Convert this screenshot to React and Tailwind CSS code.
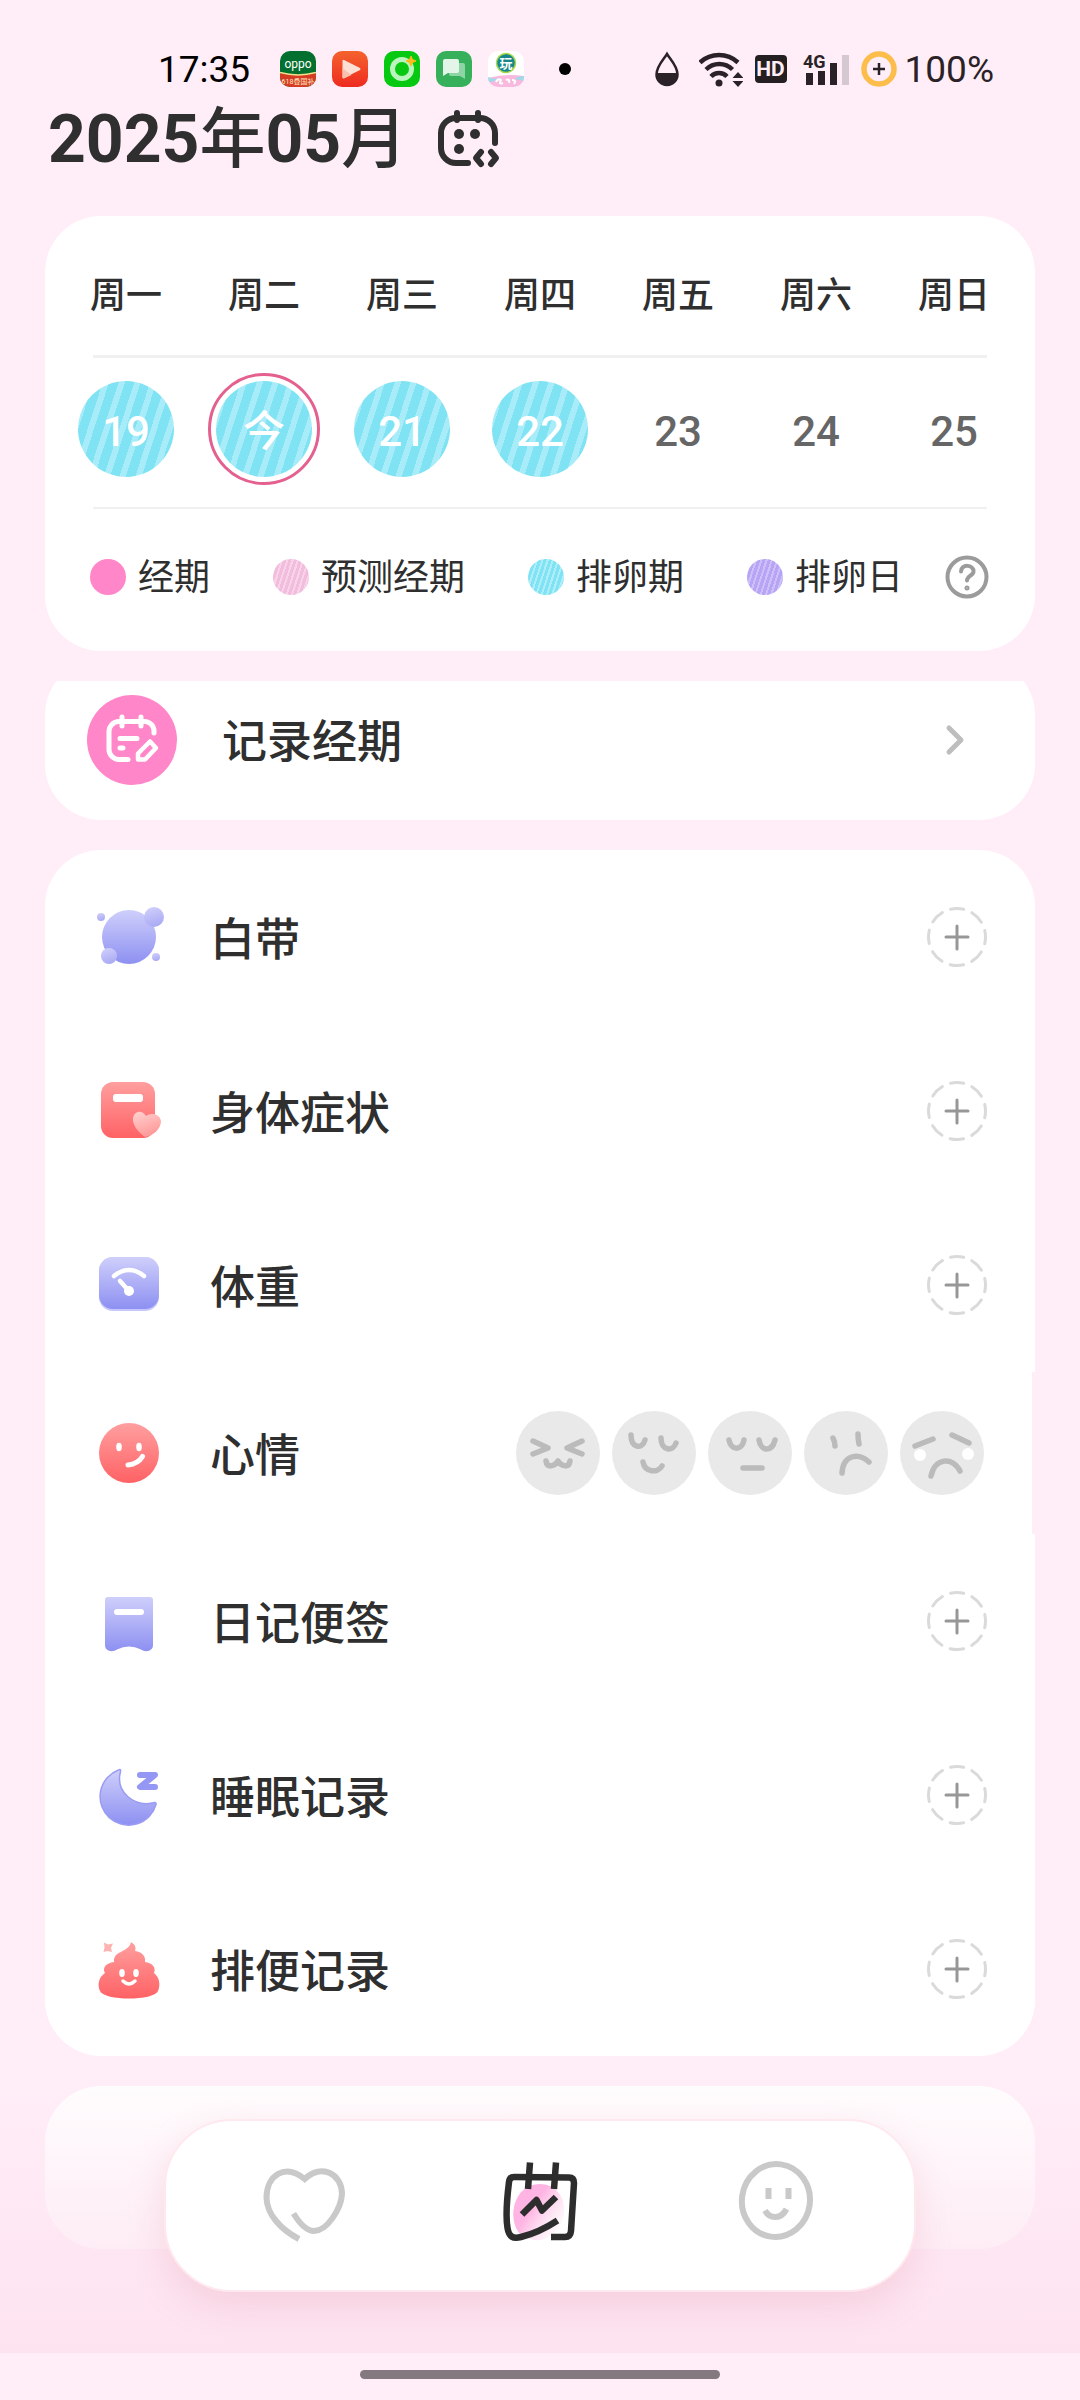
import { ChevronRight } from "lucide-react";

const weekdays = ["周一", "周二", "周三", "周四", "周五", "周六", "周日"];

const days = [
  { label: "19", fertile: true },
  { label: "今", fertile: true, today: true },
  { label: "21", fertile: true },
  { label: "22", fertile: true },
  { label: "23" },
  { label: "24" },
  { label: "25" },
];

const legend = [
  { label: "经期", dot: "bg-[#ff86c8]" },
  { label: "预测经期", dot: "bg-[repeating-linear-gradient(108deg,#f2bcdd_0_3px,#f8d3ea_3px_5px)]" },
  { label: "排卵期", dot: "bg-[repeating-linear-gradient(108deg,#7fe3f3_0_3px,#aeeefa_3px_5px)]" },
  { label: "排卵日", dot: "bg-[repeating-linear-gradient(108deg,#b7a4f5_0_3px,#cdc0fa_3px_5px)]" },
];

const records = [
  { name: "白带", icon: DischargeIcon },
  { name: "身体症状", icon: SymptomIcon },
  { name: "体重", icon: WeightIcon },
  { name: "心情", icon: MoodIcon, moods: true },
  { name: "日记便签", icon: DiaryIcon },
  { name: "睡眠记录", icon: SleepIcon },
  { name: "排便记录", icon: PoopIcon },
];

const faces = [
  { name: "开心", d: "M17 30l15 7-15 6M66 30l-15 7 15 6M30 50c1 7 8 6 12 0c4 6 11 7 12 0" },
  { name: "愉快", d: "M19 24c0 13 11 15 14 5M49 27c0 13 12 14 15 5M31 51c2 11 15 11 19 4" },
  { name: "平静", d: "M21 29c2 11 13 11 15 0M51 29c2 12 13 12 16 0M35 57h19" },
  { name: "低落", d: "M29 27q2 4 2 8M54 23q0 5 1 10M38 62c1-18 16-21 27-11" },
  { name: "难过", d: "M15 35l18-7M52 24l17 8M31 65c4-18 21-20 29-5", tears: true },
];

function Gradients() {
  return (
    <svg className="absolute size-0" aria-hidden="true">
      <defs>
        <linearGradient id="violet" x1="0" y1="0" x2="0" y2="1">
          <stop offset="0" stopColor="#cfcffb" />
          <stop offset="1" stopColor="#8d90f1" />
        </linearGradient>
        <linearGradient id="lilac" x1="0" y1="0" x2="0.3" y2="1">
          <stop offset="0" stopColor="#d3d1fb" />
          <stop offset="1" stopColor="#abacf5" />
        </linearGradient>
        <linearGradient id="coral" x1="0" y1="0" x2="0" y2="1">
          <stop offset="0" stopColor="#ff9f9f" />
          <stop offset="1" stopColor="#ff6265" />
        </linearGradient>
        <linearGradient id="blush" x1="0" y1="0" x2="0.4" y2="1">
          <stop offset="0" stopColor="#ffd3d1" />
          <stop offset="1" stopColor="#ff9a9a" />
        </linearGradient>
        <linearGradient id="petal" x1="0.1" y1="0.2" x2="0.9" y2="0.8">
          <stop offset="0.35" stopColor="#ffb4e3" />
          <stop offset="1" stopColor="#ffe9f4" stopOpacity="0.3" />
        </linearGradient>
        <linearGradient id="play" x1="0" y1="0" x2="0" y2="1">
          <stop offset="0" stopColor="#f4632d" />
          <stop offset="1" stopColor="#ee2a20" />
        </linearGradient>
      </defs>
    </svg>
  );
}

function DischargeIcon() {
  return (
    <svg viewBox="0 0 72 72" className="size-[72px]">
      <circle cx="36" cy="36" r="27" fill="url(#violet)" />
      <circle cx="61" cy="16" r="10" fill="url(#lilac)" />
      <circle cx="16" cy="55" r="8" fill="url(#lilac)" />
      <circle cx="8" cy="16" r="4" fill="url(#lilac)" />
      <circle cx="63" cy="56" r="4" fill="url(#lilac)" />
    </svg>
  );
}

function SymptomIcon() {
  return (
    <svg viewBox="0 0 72 72" className="size-[72px]">
      <rect x="8" y="7" width="54" height="56" rx="12" fill="url(#coral)" />
      <rect x="20" y="19" width="30" height="8" rx="3" fill="#fff" />
      <path d="M52 62C46 58 39 50 40 43C41 36 49 34 53 41C58 37 67 39 68 46C68 54 60 61 52 62Z" fill="url(#blush)" />
    </svg>
  );
}

function WeightIcon() {
  return (
    <svg viewBox="0 0 72 72" className="size-[72px]">
      <rect x="6" y="8" width="60" height="54" rx="14" fill="#c6c7fb" />
      <rect x="6" y="8" width="60" height="52" rx="14" fill="url(#violet)" />
      <path d="M21 27q15-12 30 0" fill="none" stroke="#fff" strokeWidth="4.5" strokeLinecap="round" />
      <path d="M27 32l9 10" stroke="#fff" strokeWidth="4.5" strokeLinecap="round" />
      <circle cx="36" cy="42" r="5" fill="#fff" />
    </svg>
  );
}

function MoodIcon() {
  return (
    <svg viewBox="0 0 72 72" className="size-[72px]">
      <circle cx="36" cy="36" r="30" fill="url(#coral)" />
      <ellipse cx="26" cy="30" rx="2.8" ry="4.2" fill="#fff" />
      <ellipse cx="46" cy="30" rx="2.8" ry="4.2" fill="#fff" />
      <path d="M35 48q10-1 14.500-8.500" fill="none" stroke="#fff" strokeWidth="5" strokeLinecap="round" />
    </svg>
  );
}

function DiaryIcon() {
  return (
    <svg viewBox="0 0 72 72" className="size-[72px]">
      <path d="M15 12h42a3 3 0 0 1 3 3v45c0 6-7 8-12 4.500q-12-6-24 0C19 68 12 66 12 60V15a3 3 0 0 1 3-3Z" fill="url(#violet)" />
      <rect x="21" y="24" width="30" height="6" rx="3" fill="#fff" />
    </svg>
  );
}

function SleepIcon() {
  return (
    <svg viewBox="0 0 72 72" className="size-[72px]">
      <path
        d="M25.500 11A28.500 28.500 0 1 0 63 45.500C63.500 43.500 62 43 60 43.800C42 48 22 34 27.500 12.500C28 10.500 27 10 25.500 11Z"
        fill="url(#violet)"
        stroke="#9a9cf3"
        strokeWidth="1.5"
      />
      <path d="M47 16h15L47 28h15" fill="none" stroke="#9597f5" strokeWidth="6" strokeLinecap="round" strokeLinejoin="round" />
    </svg>
  );
}

function PoopIcon() {
  return (
    <svg viewBox="0 0 72 72" className="size-[72px]">
      <path
        d="M38 9C43 12 43 15 42 18C49 19 53 23 52 29C60 30 63 35 61 40C66 44 68 51 65 58C61 68 11 68 7 58C4 51 6 44 12 40C9 35 13 30 21 29C20 17 36 20 38 9Z"
        fill="url(#coral)"
      />
      <path d="M11 9.500l4 2 5-1-2 4.500 1 4-4.500-1-4 1 1-4.500Z" fill="#ffb3b1" />
      <ellipse cx="29" cy="40" rx="2.8" ry="4" fill="#fff" />
      <ellipse cx="43" cy="40" rx="2.8" ry="4" fill="#fff" />
      <path d="M30 48q6 6 12 0" fill="none" stroke="#fff" strokeWidth="3.5" strokeLinecap="round" />
    </svg>
  );
}

function StatusBar() {
  return (
    <div className="flex h-12 items-center justify-between pr-[86px] pl-[158px] text-[37px] leading-none">
      <div className="flex items-center text-black">
        <span>17:35</span>
        <div className="ml-[30px] flex items-center gap-4">
          <svg viewBox="0 0 36 36" className="size-9 rounded-[10px]">
            <rect width="36" height="36" fill="#03702f" />
            <path d="M0 22q18 4 36 0v14H0Z" fill="#d43c23" />
            <path d="M0 21.500q18 5 36 0" fill="none" stroke="#f4e08a" strokeWidth="1.5" />
            <text x="18" y="17" textAnchor="middle" fontSize="12" fill="#fff">oppo</text>
            <text x="18" y="33" textAnchor="middle" fontSize="7" fill="#ffe9c4">618叠国补</text>
          </svg>
          <svg viewBox="0 0 36 36" className="size-9 rounded-[10px]">
            <rect width="36" height="36" fill="url(#play)" />
            <path d="M12 9q-1.500-1-1.500 1v16q0 2 1.500 1l16-8q1-1 0-2Z" fill="#fde0d5" />
            <path d="M10.500 17l9 7-7.500 3.500q-1.500 0-1.500-1.500Z" fill="#fbbfae" />
          </svg>
          <svg viewBox="0 0 36 36" className="size-9 rounded-[10px]">
            <rect width="36" height="36" fill="#07c911" />
            <circle cx="18" cy="18" r="9.500" fill="none" stroke="#b9f5bc" strokeWidth="5" />
            <path d="M27 5l1.500 3.500L32 10l-3.500 1.500L27 15l-1.500-3.500L22 10l3.500-1.500Z" fill="#fbb91e" stroke="#fbb91e" />
          </svg>
          <svg viewBox="0 0 36 36" className="size-9 rounded-[10px]">
            <rect width="36" height="36" fill="#37b05c" />
            <path d="M15 12h12a2 2 0 0 1 2 2v14l-5-3h-9a2 2 0 0 1-2-2v-9Z" fill="#8fd4a4" />
            <path d="M9 8h12a2 2 0 0 1 2 2v10a2 2 0 0 1-2 2h-9l-5 3V10a2 2 0 0 1 2-2Z" fill="#e3f5e8" />
          </svg>
          <svg viewBox="0 0 36 36" className="size-9 rounded-[10px]">
            <rect width="36" height="36" fill="#fff" />
            <path d="M0 27q18-5 36-2v11H0Z" fill="#f7b9dd" />
            <path d="M0 26q6 3 12 1l-8 4H0ZM36 25q-6 0-9 3l9 2Z" fill="#9fd9ea" />
            <circle cx="18" cy="12" r="9.500" fill="#17878b" stroke="#a5d84a" strokeWidth="1.500" />
            <text x="18" y="17" textAnchor="middle" fontSize="13" fontWeight="700" fill="#fff">玩</text>
            <path d="M8 31q2-4 5-2q-3 5 2 3M18 29q4-2 3 3M24 29q5 0 2 4" fill="none" stroke="#fff" strokeWidth="2" />
          </svg>
        </div>
        <span className="ml-[35px] size-3 rounded-full bg-black" />
      </div>

      <div className="flex items-center gap-3 text-[#2a2226]">
        <svg viewBox="0 0 32 36" className="h-9 w-8">
          <path d="M12 3C9 8 1.500 15 1.500 23.500a10.500 10.500 0 0 0 21 0C22.500 15 15 8 12 3Z" fill="none" stroke="currentColor" strokeWidth="2.5" />
          <path d="M1.500 22h21c1 17-22 17-21 0Z" fill="currentColor" />
        </svg>
        <svg viewBox="0 0 44 36" className="h-9 w-11">
          <g fill="none" stroke="currentColor" strokeWidth="4.5">
            <path d="M1 11.500a28 28 0 0 1 38 0" />
            <path d="M7 18.500a19 19 0 0 1 26.500 0" />
            <path d="M12 25.500a11 11 0 0 1 16 0" />
          </g>
          <circle cx="20" cy="32" r="3.5" fill="currentColor" />
          <path d="M33.500 27l5.500-6 5.500 6ZM33.500 30h11l-5.500 6Z" fill="currentColor" />
        </svg>
        <span className="flex h-7 w-8 items-center justify-center rounded bg-[#242021] text-[21px] font-bold text-[#ffeef8]">HD</span>
        <svg viewBox="0 0 50 36" className="h-9 w-[50px]">
          <text x="4" y="17" fontSize="18" fontWeight="700" fill="currentColor">4G</text>
          <path d="M7 22h7v12H7ZM19 20h7v14h-7ZM31 12h7v22h-7Z" fill="currentColor" />
          <path d="M43 4h7v30h-7Z" fill="#d6c8d0" />
        </svg>
        <div className="flex items-center gap-2">
          <svg viewBox="0 0 36 36" className="size-9">
            <circle cx="18" cy="18" r="15" fill="none" stroke="#fcbd4b" strokeWidth="5.5" />
            <path d="M18 12v12M12 18h12" stroke="currentColor" strokeWidth="2.5" />
          </svg>
          <span>100%</span>
        </div>
      </div>
    </div>
  );
}

function CalendarCard() {
  return (
    <section className="rounded-[56px] bg-white">
      <div className="grid grid-cols-7 px-3 pt-[53px] pb-8 text-center text-[36px] leading-[54px] font-medium">
        {weekdays.map(w => <span key={w}>{w}</span>)}
      </div>
      <hr className="mx-12 border-t-[3px] border-[#f0f0f0]" />
      <div className="grid grid-cols-7 justify-items-center px-3 pt-[15px] pb-[22px]">
        {days.map(day => (
          <button
            key={day.label}
            className={`flex size-28 items-center justify-center rounded-full ${day.today ? "border-[3px] border-[#e3608f]" : ""}`}
          >
            <span
              className={`flex size-24 items-center justify-center rounded-full pt-1.5 text-[42px] leading-none font-medium ${
                day.fertile
                  ? "bg-[repeating-linear-gradient(108deg,#7fe3f3_0_9px,#a9ecf9_9px_15px)] text-white"
                  : "text-[#666]"
              }`}
            >
              {day.label}
            </span>
          </button>
        ))}
      </div>
      <hr className="mx-12 border-t-2 border-[#f0f0f0]" />
      <div className="flex items-center pt-11 pr-[46px] pb-[51px] pl-[45px]">
        <ul className="flex grow justify-between">
          {legend.map(item => (
            <li key={item.label} className="flex items-center gap-3 text-[36px] leading-[44px]">
              <span className={`size-9 rounded-full ${item.dot}`} />
              <span className="pt-[3px]">{item.label}</span>
            </li>
          ))}
        </ul>
        <button aria-label="图例说明" className="ml-[42px] text-[#9b9b9b]">
          <svg viewBox="0 0 44 44" className="size-11" fill="none" stroke="currentColor" strokeLinecap="round">
            <circle cx="22" cy="22" r="19.500" strokeWidth="4" />
            <path d="M16 16.500c0-8 13-7 12.500 0c0 4-6.500 4.500-6.500 9" strokeWidth="4" />
            <circle cx="22" cy="33" r="1" strokeWidth="3" />
          </svg>
        </button>
      </div>
    </section>
  );
}

function RecordPeriod() {
  return (
    <div className="overflow-hidden">
      <a href="#period" className="-mt-[22px] flex h-[161px] items-center rounded-[56px] bg-white pr-14 pl-[42px]">
        <svg viewBox="0 0 90 90" className="size-[90px]">
          <circle cx="45" cy="45" r="45" fill="#ff86c8" />
          <g fill="none" stroke="#fff" strokeLinecap="round" strokeLinejoin="round" strokeWidth="5">
            <path d="M67 38V36A9.500 9.500 0 0 0 57.500 26.500H32A10 10 0 0 0 22 36.500V54.500A10 10 0 0 0 32 64.500H41" />
            <path d="M35 22v9M54 22v9M33 43.500h17M33 53h3" />
            <path d="M51 64.500V58.500L63 46.500L69 53L58 64.500Z" strokeWidth="4.5" />
          </g>
        </svg>
        <span className="ml-[45px] grow pt-1.5 text-[45px] leading-none font-medium">记录经期</span>
        <ChevronRight className="size-12 text-[#bebebe]" strokeWidth={2.5} />
      </a>
    </div>
  );
}

function AddButton({ name }) {
  return (
    <button aria-label={`添加${name}`}>
      <svg viewBox="0 0 60 60" className="size-[60px]" fill="none" strokeLinecap="round">
        <circle cx="30" cy="30" r="28.500" stroke="#dadada" strokeWidth="3" strokeDasharray="13.500 8.884" strokeDashoffset="6.750" transform="rotate(-90 30 30)" />
        <path d="M30 19v23M19 30h22" stroke="#979797" strokeWidth="3" />
      </svg>
    </button>
  );
}

function RecordRow({ name, icon: Icon, moods }) {
  return (
    <li className={`flex items-center bg-white px-12 ${moods ? "mr-[3px] h-[162px]" : "h-[174px]"}`}>
      <Icon />
      <span className="ml-[45px] grow pt-1.5 text-[45px] leading-none font-medium">{name}</span>
      {moods ? (
        <div className="flex gap-3">
          {faces.map(face => (
            <button key={face.name} aria-label={face.name}>
              <svg viewBox="0 0 84 84" className="size-[84px]">
                <circle cx="42" cy="42" r="42" fill="#e9e9e9" />
                {face.tears && (
                  <g fill="#fff">
                    <circle cx="20" cy="44" r="6" />
                    <circle cx="68" cy="43" r="6" />
                  </g>
                )}
                <path d={face.d} fill="none" stroke="#bbb" strokeWidth="5.5" strokeLinecap="round" strokeLinejoin="round" />
              </svg>
            </button>
          ))}
        </div>
      ) : (
        <AddButton name={name} />
      )}
    </li>
  );
}

function TabBar() {
  return (
    <nav className="relative mx-auto mb-[61px] grid h-[173px] w-full max-w-[752px] grid-cols-3 place-items-center rounded-[68px] border-2 border-[#ffe9ee] bg-white px-5 pb-2 shadow-[0_14px_36px_rgba(226,140,160,0.24)]">
      <a href="#home" aria-label="首页" className="text-[#c9c9c9]">
        <svg viewBox="0 0 84 84" className="size-[84px]" fill="none" stroke="currentColor" strokeWidth="6">
          <path d="M31.500 53.500C38 64 45 71 52 71C65 71 79 49 80 34C80 14 60 3 42.700 19C23 3 4.500 15 4.500 38C5 54 18 69 37 79" />
        </svg>
      </a>
      <a href="#record" aria-label="记录" className="text-[#2d2d2d]">
        <svg viewBox="0 0 84 84" className="size-[84px]" fill="none" stroke="currentColor" strokeWidth="6.5">
          <path d="M24 76C8 62 14 24 42 24C58 24 68 38 66 54C63 70 50 82 36 80Z" fill="url(#petal)" stroke="none" />
          <path d="M53 77H67Q72.500 77 73 71L76 23Q76 17.500 71 17.500L16 17Q11.500 17 11 22C9 38 7.500 56 9.500 68C11 77 15 79 23 77C35 74 48 68 59.500 60.500" />
          <path d="M32 2.500L30 29M58 2.500L56 29" />
          <path d="M24 54.500L38.500 40L44 50.500L58 37" strokeLinejoin="round" />
        </svg>
      </a>
      <a href="#me" aria-label="我的" className="text-[#c9c9c9]">
        <svg viewBox="0 0 84 84" className="size-[84px]" fill="none" stroke="currentColor" strokeWidth="6">
          <ellipse cx="42" cy="40.500" rx="34" ry="36.500" transform="rotate(8 42 40)" />
          <path d="M34.500 28v11M54.500 28v11M31 50.500c5 9 16 9 21.500-1.500" />
        </svg>
      </a>
    </nav>
  );
}

export default function App() {
  return (
    <div className="bg-[#ffeef8] font-[Roboto,'Noto_Sans_CJK_SC',sans-serif] text-[#2f2f2f]">
      <Gradients />
      <main className="relative pt-[45px] pb-[104px]">
        <StatusBar />
        <header className="flex h-[89px] items-center px-12">
          <h1 className="pt-1 text-[66px] leading-none font-bold">2025<span className="font-medium">年</span>05<span className="font-medium">月</span></h1>
          <button aria-label="选择日期" className="ml-7">
            <svg viewBox="0 0 66 66" className="size-[66px]" fill="none" stroke="currentColor" strokeWidth="6" strokeLinecap="round" strokeLinejoin="round">
              <path d="M60 38V28a15 15 0 0 0-15-15H21A15 15 0 0 0 6 28v15a15 15 0 0 0 15 15h12" />
              <path d="M22 8v7M43 8v7M46 47l-5 6 5 6M56 47l5 6-5 6" />
              <g fill="currentColor" stroke="none">
                <circle cx="24" cy="29" r="5" />
                <circle cx="40" cy="29" r="5" />
                <circle cx="24" cy="44" r="5" />
              </g>
            </svg>
          </button>
        </header>

        <div className="mt-[34px] flex flex-col gap-[30px] px-[45px]">
          <CalendarCard />
          <RecordPeriod />
          <ul className="overflow-hidden rounded-[56px]">
            {records.map(r => <RecordRow key={r.name} {...r} />)}
          </ul>
          <section className="h-[163px] rounded-[56px] bg-white" />
        </div>

        <div className="absolute inset-x-0 bottom-0 flex h-[296px] items-end bg-linear-to-b from-[#fde3f000] to-[#fde3f0]">
          <TabBar />
        </div>
      </main>
      <footer className="flex h-12 items-center justify-center pb-1.5">
        <div className="h-[9px] w-1/3 rounded-full bg-[#84797f]" />
      </footer>
    </div>
  );
}
